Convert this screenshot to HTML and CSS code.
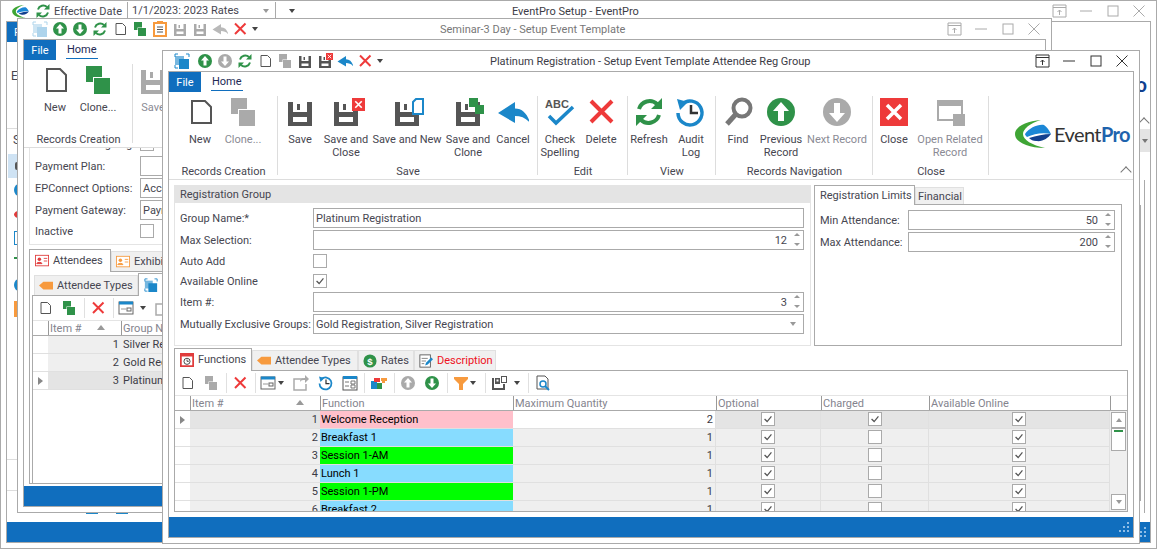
FILE: index.html
```html
<!DOCTYPE html>
<html lang="en">
<head>
<meta charset="utf-8">
<title>EventPro Setup</title>
<link rel="stylesheet" href="styles.css">
</head>
<body>
<svg class="defs" width="0" height="0" aria-hidden="true">
  <defs>
    <symbol id="i-new" viewBox="0 0 32 32"><path d="M8 5h13l6 6v16H8z" fill="#fff" stroke="#555" stroke-width="2"/></symbol>
    <symbol id="i-clone" viewBox="0 0 32 32"><rect x="4" y="2" width="16" height="16" fill="currentColor"/><rect x="11" y="13" width="18" height="18" fill="#fff"/><rect x="12" y="14" width="16" height="16" fill="currentColor"/></symbol>
    <symbol id="i-floppy" viewBox="0 0 32 32"><path fill="currentColor" fill-rule="evenodd" d="M4 6h24v24H4zM9 6v10h14V6zM13 8h3v6h-3zM9 21v5h14v-5z"/></symbol>
    <symbol id="i-xbox" viewBox="0 0 32 32"><rect width="32" height="32" fill="#ee3a3a"/><path d="M8 8l16 16M24 8L8 24" stroke="#fff" stroke-width="4"/></symbol>
    <symbol id="i-x" viewBox="0 0 32 32"><path d="M6 5l21 21M27 5L6 26" stroke="#ee3a3a" stroke-width="4" fill="none"/></symbol>
    <symbol id="i-undo" viewBox="0 0 32 32"><path fill="#1b87c9" d="M1 17L18 6v6.500C26 12.500 31 19 33 27 29 22 24 20 18 20v7z"/></symbol>
    <symbol id="i-refresh" viewBox="0 0 32 32"><g fill="none" stroke="#2f9249" stroke-width="4"><path d="M6 13a11 11 0 0 1 18-5"/><path d="M26 19a11 11 0 0 1-18 5"/></g><path fill="#2f9249" d="M29 2v11H18zM3 30V19h11z"/></symbol>
    <symbol id="i-audit" viewBox="0 0 32 32"><path d="M7 8a12 12 0 1 1-4 9" fill="none" stroke="#1b87c9" stroke-width="3.500"/><path fill="#1b87c9" d="M2 3l11 3-8 8z"/><path d="M16 9v8h7" fill="none" stroke="#333" stroke-width="2.500"/></symbol>
    <symbol id="i-find" viewBox="0 0 32 32"><circle cx="20" cy="12" r="8.500" fill="none" stroke="#777" stroke-width="4"/><path d="M14 18L5 28" stroke="#777" stroke-width="5"/></symbol>
    <symbol id="i-up" viewBox="0 0 32 32"><circle cx="16" cy="16" r="14" fill="currentColor"/><path fill="#fff" d="M16 6l8 9h-5v10h-6V15H8z"/></symbol>
    <symbol id="i-down" viewBox="0 0 32 32"><circle cx="16" cy="16" r="14" fill="currentColor"/><path fill="#fff" d="M16 26l8-9h-5V7h-6v10H8z"/></symbol>
    <symbol id="i-related" viewBox="0 0 32 32"><path fill="#aaa" fill-rule="evenodd" d="M3 4h26v18h-2V10H5v13h14v2H3z"/><rect x="19" y="18" width="12" height="12" fill="#aaa"/></symbol>
    <symbol id="i-app" viewBox="0 0 16 16"><path d="M1 4V1h3M12 1h3v3M1 12v3h3" fill="none" stroke="#1b87c9"/><rect x="1" y="3" width="9" height="9" fill="#1b87c9" opacity=".6"/><rect x="5" y="6" width="10" height="10" fill="#1b87c9"/></symbol>
    <symbol id="i-clip" viewBox="0 0 16 16"><rect x="2" y="2" width="12" height="13" fill="#fff" stroke="#f79a3e" stroke-width="2"/><rect x="5" y="0" width="6" height="3" fill="#f79a3e"/><path d="M5 6h6M5 8.500h6M5 11h6" stroke="#555"/></symbol>
    <symbol id="i-view" viewBox="0 0 16 16"><rect x="1" y="2" width="14" height="12" fill="#fff" stroke="#666"/><rect x="1" y="1.500" width="14" height="3" fill="#1b87c9"/><rect x="9" y="8" width="4" height="3" fill="none" stroke="#666"/><path d="M3 9h5" stroke="#999"/></symbol>
    <symbol id="i-export" viewBox="0 0 16 16"><path d="M10 4H1v11h12V9" fill="none" stroke="#aaa" stroke-width="1.500"/><path d="M7 7c0-3 2-4 5-4V0l4 4-4 4V5C10 5 8 5 7 7z" fill="#aaa"/></symbol>
    <symbol id="i-form" viewBox="0 0 16 16"><rect x="1" y="2" width="14" height="13" fill="#fff" stroke="#555"/><rect x="1" y="1" width="14" height="3" fill="#1b87c9"/><path d="M3 7h4M3 11h4M9 6h4v3H9zM9 10h4v3H9z" fill="none" stroke="#777"/></symbol>
    <symbol id="i-colors" viewBox="0 0 16 16"><rect y="6" width="6" height="8" fill="#1b87c9"/><rect x="6" y="8" width="5" height="6" fill="#2f9249"/><rect x="3" y="3" width="6" height="4" fill="#ee3a3a"/><path d="M10 6V3h6v3h-2v2h-3V6z" fill="#f79a3e"/></symbol>
    <symbol id="i-filter" viewBox="0 0 16 16"><path fill="#f79a3e" d="M1 2h14v2l-5 5v6H6V9L1 4z"/></symbol>
    <symbol id="i-cols" viewBox="0 0 16 16"><path fill="#555" fill-rule="evenodd" d="M1 3h8v6H4V3H3v10h9V9h2v6H1z"/><rect x="5.500" y="4.500" width="2" height="2" fill="#fff"/><rect x="10.500" y="1.500" width="5" height="6" fill="#fff" stroke="#555"/></symbol>
    <symbol id="i-search" viewBox="0 0 16 16"><path d="M2 1h8l3 3v10H2z" fill="#fff" stroke="#555"/><circle cx="8" cy="9" r="3" fill="none" stroke="#1b87c9" stroke-width="1.500"/><path d="M10 11l4 4" stroke="#1b87c9" stroke-width="2"/></symbol>
    <symbol id="i-cal" viewBox="0 0 16 16"><rect x="1" y="1" width="14" height="14" fill="#fff" stroke="#e03c3c" stroke-width="2"/><rect x="1" y="1" width="14" height="3" fill="#e03c3c"/><circle cx="8" cy="9.500" r="3.500" fill="none" stroke="#333"/><path d="M8 7.500v2h2" fill="none" stroke="#333"/></symbol>
    <symbol id="i-tag" viewBox="0 0 16 16"><path fill="#f79a3e" d="M5 3h11v9H5L0 7.500z"/></symbol>
    <symbol id="i-dollar" viewBox="0 0 16 16"><circle cx="8" cy="8" r="7.500" fill="#2f9249"/><text x="8" y="12" text-anchor="middle" font-size="11" font-weight="700" fill="#fff" font-family="Liberation Sans">$</text></symbol>
    <symbol id="i-desc" viewBox="0 0 16 16"><rect x="1" y="1" width="12" height="14" fill="#fff" stroke="#555"/><path d="M3 5h7M3 8h5M3 11h3" stroke="#777"/><path d="M7 13l1-3 6-6 2 2-6 6z" fill="#1b87c9"/></symbol>
    <symbol id="i-card" viewBox="0 0 16 16"><rect x=".5" y="1.500" width="15" height="12" fill="#fff" stroke="currentColor"/><circle cx="5" cy="6" r="2" fill="currentColor"/><path d="M2 11c0-2 6-2 6 0zM10 5h4M10 8h4" fill="currentColor" stroke="currentColor"/></symbol>
    <symbol id="i-pop" viewBox="0 0 16 16"><path d="M1 2h13v12H1zM1 4.500h13M7.500 12V7M5.500 9l2-2 2 2" fill="none" stroke="currentColor"/></symbol>
    <symbol id="i-min" viewBox="0 0 16 16"><path d="M2 8h12" stroke="currentColor"/></symbol>
    <symbol id="i-max" viewBox="0 0 16 16"><rect x="3" y="3" width="10" height="10" fill="none" stroke="currentColor"/></symbol>
    <symbol id="i-cls" viewBox="0 0 16 16"><path d="M2.500 2.500l11 11M13.500 2.500l-11 11" fill="none" stroke="currentColor"/></symbol>
    <symbol id="i-tick" viewBox="0 0 14 14"><path d="M3 7l3 3 5-6" fill="none" stroke="#555" stroke-width="1.500"/></symbol>
    <symbol id="i-grip" viewBox="0 0 12 12"><path fill="#8fbde6" d="M9 0h2v2H9zM5 4h2v2H5zM9 4h2v2H9zM1 8h2v2H1zM5 8h2v2H5zM9 8h2v2H9z"/></symbol>
    <symbol id="i-swoosh" viewBox="0 0 36 28">
      <path fill="#3fa535" d="M26 0C11 1 0 7 0 14c0 8 12 14 30 14C17 25 8 20 8 14 8 9 15 3 26 0z"/>
      <path fill="#1b87d6" d="M10 14C14 8 23 4 29 5c3 2 5 5 7 9-9-2-17 0-24 3-1-1-2-2-2-3z"/>
      <path fill="#12408f" d="M14 18c7-2 15-4 22-4-3 4-8 8-15 7-3 0-5-1-7-3z"/>
    </symbol>
  </defs>
</svg>

<main class="desktop">

  <section class="win win-main">
    <header class="titlebar">
      <svg class="main-logo"><use href="#i-swoosh"/></svg>
      <svg class="ic16"><use href="#i-refresh"/></svg>
      <span class="eff-label">Effective Date</span>
      <span class="eff-combo"><span>1/1/2023: 2023 Rates</span><i class="caret light"></i></span>
      <i class="caret qat-caret"></i>
      <span class="title main-title">EventPro Setup - EventPro</span>
      <span class="winbtns muted main-btns">
        <svg class="ic16"><use href="#i-pop"/></svg><svg class="ic16"><use href="#i-min"/></svg><svg class="ic16"><use href="#i-max"/></svg><svg class="ic16"><use href="#i-cls"/></svg>
      </span>
    </header>
    <div class="client">
      <div class="main-area">
        <div class="main-left">
          <div class="main-tab">File</div>
          <div class="main-rib">E</div>
          <div class="main-s">S</div>
          <div class="nav-row on"><i class="dot dark"></i></div>
          <div class="nav-row"><i class="dot blue"></i></div>
          <div class="nav-row"><i class="dot red"></i></div>
          <div class="nav-row"><i class="dot outline"></i></div>
          <div class="nav-row nav-thin"><i class="dot green"></i></div>
          <div class="nav-row"><i class="dot blue"></i></div>
          <div class="nav-row"><i class="dot orange"></i></div>
          <div class="main-line"></div>
          <div class="main-line second"></div>
        </div>
        <div class="main-bits">
          <i class="bit"></i><i class="bit"></i>
        </div>
        <div class="main-right">
          <div class="main-right-top">
            <span class="logo-clip">Pro</span>
            <i class="chev"></i>
          </div>
          <div class="main-band"><i class="caret"></i></div>
          <div class="main-gap"></div>
          <div class="main-rails"><div class="rail-inner"></div></div>
        </div>
      </div>
      <footer class="status"><svg class="grip"><use href="#i-grip"/></svg></footer>
    </div>
  </section>

  <section class="win win-two">
    <header class="titlebar">
      <div class="qat">
        <span class="qi"><svg class="ic16 faint"><use href="#i-app"/></svg></span>
        <span class="qi"><svg class="ic16 green"><use href="#i-up"/></svg></span>
        <span class="qi"><svg class="ic16 green"><use href="#i-down"/></svg></span>
        <span class="qi"><svg class="ic16"><use href="#i-refresh"/></svg></span>
        <span class="qi"><svg class="ic16"><use href="#i-new"/></svg></span>
        <span class="qi"><svg class="ic16 green"><use href="#i-clone"/></svg></span>
        <span class="qi"><svg class="ic16"><use href="#i-clip"/></svg></span>
        <span class="qi"><svg class="ic16 grey"><use href="#i-floppy"/></svg></span>
        <span class="qi"><svg class="ic16 grey"><use href="#i-floppy"/></svg></span>
        <span class="qi"><svg class="ic16 fade"><use href="#i-undo"/></svg></span>
        <span class="qi"><svg class="ic16"><use href="#i-x"/></svg></span>
        <i class="caret qat-more"></i>
      </div>
      <span class="title two-title">Seminar-3 Day - Setup Event Template</span>
      <span class="winbtns muted">
        <svg class="ic16"><use href="#i-pop"/></svg><svg class="ic16"><use href="#i-min"/></svg><svg class="ic16"><use href="#i-max"/></svg><svg class="ic16"><use href="#i-cls"/></svg>
      </span>
    </header>
    <div class="client">
      <nav class="ribtabs"><span class="file">File</span><span class="home">Home</span></nav>
      <div class="ribbon">
        <div class="rgroup g1">
          <div class="rbtns">
            <div class="rbtn w42"><svg class="ic32"><use href="#i-new"/></svg><span>New</span></div>
            <div class="rbtn w44"><svg class="ic32 green"><use href="#i-clone"/></svg><span>Clone...</span></div>
          </div>
          <div class="rlabel">Records Creation</div>
        </div>
        <div class="rgroup">
          <div class="rbtns">
            <div class="rbtn w40 dis"><svg class="ic32 grey"><use href="#i-floppy"/></svg><span>Save</span></div>
          </div>
        </div>
      </div>
      <div class="two-body">
        <div class="two-form">
          <div class="frow"><label>Use Event Subgoing</label><i class="cb"></i></div>
          <div class="frow"><label>Payment Plan:</label><i class="inp"></i></div>
          <div class="frow"><label>EPConnect Options:</label><i class="inp">Access</i></div>
          <div class="frow"><label>Payment Gateway:</label><i class="inp">Payment</i></div>
          <div class="frow last"><label>Inactive</label><i class="cb"></i></div>
        </div>
        <div class="tabs two-tabs">
          <span class="tab active t82"><svg class="ic16 red"><use href="#i-card"/></svg>Attendees</span>
          <span class="tab"><svg class="ic16 orange"><use href="#i-card"/></svg>Exhibitors</span>
        </div>
        <div class="two-panel">
          <div class="tabs two-sub">
            <span class="tab t104"><svg class="ic16"><use href="#i-tag"/></svg>Attendee Types</span>
            <span class="tab active"><svg class="ic16"><use href="#i-app"/></svg>Registration</span>
          </div>
          <div class="gridbox two-grid">
            <div class="toolbar">
              <span class="ti"><svg class="ic16"><use href="#i-new"/></svg></span>
              <span class="ti"><svg class="ic16 green"><use href="#i-clone"/></svg></span>
              <i class="tsep ml3"></i>
              <span class="ti ml1"><svg class="ic16"><use href="#i-x"/></svg></span>
              <i class="tsep ml3"></i>
              <span class="ti"><svg class="ic16"><use href="#i-view"/></svg></span>
              <i class="caret"></i>
              <span class="ti ml3"><svg class="ic16"><use href="#i-export"/></svg></span>
            </div>
            <div class="ghead two-cols">
              <span></span><span>Item #<i class="sort"></i></span><span>Group Name</span>
            </div>
            <div class="grow two-cols"><span class="c-ind"></span><span class="c-num">1</span><span class="c-txt">Silver Registration</span></div>
            <div class="grow two-cols"><span class="c-ind"></span><span class="c-num">2</span><span class="c-txt">Gold Registration</span></div>
            <div class="grow two-cols sel"><span class="c-ind"><i class="rowmark"></i></span><span class="c-num">3</span><span class="c-txt">Platinum Registration</span></div>
          </div>
        </div>
      </div>
      <footer class="status"></footer>
    </div>
  </section>

  <section class="win win-three">
    <header class="titlebar">
      <div class="qat">
        <span class="qi"><svg class="ic16"><use href="#i-app"/></svg></span>
        <span class="qi ml3"><svg class="ic16 green"><use href="#i-up"/></svg></span>
        <span class="qi"><svg class="ic16 grey"><use href="#i-down"/></svg></span>
        <span class="qi"><svg class="ic16"><use href="#i-refresh"/></svg></span>
        <span class="qi"><svg class="ic16"><use href="#i-new"/></svg></span>
        <span class="qi"><svg class="ic16 grey"><use href="#i-clone"/></svg></span>
        <span class="qi"><svg class="ic16 dark"><use href="#i-floppy"/></svg></span>
        <span class="qi rel"><svg class="ic16 dark"><use href="#i-floppy"/></svg><svg class="badge-s"><use href="#i-xbox"/></svg></span>
        <span class="qi"><svg class="ic16"><use href="#i-undo"/></svg></span>
        <span class="qi"><svg class="ic16"><use href="#i-x"/></svg></span>
        <i class="caret qat-more"></i>
      </div>
      <span class="title three-title">Platinum Registration - Setup Event Template Attendee Reg Group</span>
      <span class="winbtns">
        <svg class="ic16"><use href="#i-pop"/></svg><svg class="ic16"><use href="#i-min"/></svg><svg class="ic16"><use href="#i-max"/></svg><svg class="ic16"><use href="#i-cls"/></svg>
      </span>
    </header>
    <div class="client">
      <nav class="ribtabs"><span class="file">File</span><span class="home">Home</span></nav>
      <div class="ribbon">
        <div class="rgroup g1">
          <div class="rbtns">
            <div class="rbtn w42"><svg class="ic32"><use href="#i-new"/></svg><span>New</span></div>
            <div class="rbtn w44 dis"><svg class="ic32 grey"><use href="#i-clone"/></svg><span>Clone...</span></div>
          </div>
          <div class="rlabel">Records Creation</div>
        </div>
        <div class="rgroup g2">
          <div class="rbtns">
            <div class="rbtn w40"><svg class="ic32 dark"><use href="#i-floppy"/></svg><span>Save</span></div>
            <div class="rbtn w52 rel">
              <svg class="ic32 dark"><use href="#i-floppy"/></svg>
              <svg class="badge b-x"><use href="#i-xbox"/></svg>
              <span>Save and Close</span>
            </div>
            <div class="rbtn w70 rel">
              <svg class="ic32 dark"><use href="#i-floppy"/></svg>
              <svg class="badge b-doc" viewBox="0 0 12 17"><path d="M4 1h7v15H1V4z" fill="#fff" stroke="#1b87c9" stroke-width="2"/></svg>
              <span>Save and New</span>
            </div>
            <div class="rbtn w52 rel">
              <svg class="ic32 dark"><use href="#i-floppy"/></svg>
              <svg class="badge b-clone" viewBox="0 0 15 16"><rect width="9" height="9" fill="#2f9249"/><rect x="6" y="7" width="9" height="9" fill="#2f9249"/></svg>
              <span>Save and Clone</span>
            </div>
            <div class="rbtn w38"><svg class="ic32"><use href="#i-undo"/></svg><span>Cancel</span></div>
          </div>
          <div class="rlabel">Save</div>
        </div>
        <div class="rgroup g3">
          <div class="rbtns">
            <div class="rbtn w40">
              <svg class="ic32" viewBox="0 0 32 32"><text x="1" y="12" class="abc">ABC</text><path d="M5 20l7 7L29 11" fill="none" stroke="#1b87c9" stroke-width="3.500"/></svg>
              <span>Check Spelling</span>
            </div>
            <div class="rbtn w42"><svg class="ic32"><use href="#i-x"/></svg><span>Delete</span></div>
          </div>
          <div class="rlabel">Edit</div>
        </div>
        <div class="rgroup g4">
          <div class="rbtns">
            <div class="rbtn w42"><svg class="ic32"><use href="#i-refresh"/></svg><span>Refresh</span></div>
            <div class="rbtn w42"><svg class="ic32"><use href="#i-audit"/></svg><span>Audit Log</span></div>
          </div>
          <div class="rlabel">View</div>
        </div>
        <div class="rgroup g5">
          <div class="rbtns">
            <div class="rbtn w44"><svg class="ic32"><use href="#i-find"/></svg><span>Find</span></div>
            <div class="rbtn w42"><svg class="ic32 green"><use href="#i-up"/></svg><span>Previous Record</span></div>
            <div class="rbtn w70 dis"><svg class="ic32 grey"><use href="#i-down"/></svg><span>Next Record</span></div>
          </div>
          <div class="rlabel">Records Navigation</div>
        </div>
        <div class="rgroup g6">
          <div class="rbtns">
            <div class="rbtn w42"><svg class="ic28"><use href="#i-xbox"/></svg><span>Close</span></div>
            <div class="rbtn w70 dis"><svg class="ic32"><use href="#i-related"/></svg><span>Open Related Record</span></div>
          </div>
          <div class="rlabel">Close</div>
        </div>
        <div class="logo">
          <svg class="swoosh"><use href="#i-swoosh"/></svg>
          <span class="logotext">Event<b>Pro</b></span>
        </div>
        <i class="chev rib-chev"></i>
      </div>

      <div class="body">
        <div class="toprow">
          <div class="regbox">
            <h2 class="boxhead">Registration Group</h2>
            <div class="form">
              <label>Group Name:*</label><div class="inp dk">Platinum Registration</div>
              <label>Max Selection:</label><div class="inp num dk">12<i class="spin"></i></div>
              <label>Auto Add</label><div class="cbwrap"><i class="cb"></i></div>
              <label>Available Online</label><div class="cbwrap"><i class="cb"><svg><use href="#i-tick"/></svg></i></div>
              <label>Item #:</label><div class="inp num dk">3<i class="spin"></i></div>
              <label>Mutually Exclusive Groups:</label><div class="inp dk drop">Gold Registration, Silver Registration<i class="caret light"></i></div>
            </div>
          </div>
          <div class="limits">
            <div class="tabs lim-tabs">
              <span class="tab active">Registration Limits</span>
              <span class="tab">Financial</span>
            </div>
            <div class="limpanel">
              <label>Min Attendance:</label><div class="inp num dk">50<i class="spin"></i></div>
              <label>Max Attendance:</label><div class="inp num dk">200<i class="spin"></i></div>
            </div>
          </div>
        </div>

        <div class="tabs low-tabs">
          <span class="tab active t78"><svg class="ic16"><use href="#i-cal"/></svg>Functions</span>
          <span class="tab t106"><svg class="ic16"><use href="#i-tag"/></svg>Attendee Types</span>
          <span class="tab t56"><svg class="ic16"><use href="#i-dollar"/></svg>Rates</span>
          <span class="tab t82 redtxt"><svg class="ic16"><use href="#i-desc"/></svg>Description</span>
        </div>
        <div class="gridbox main-grid">
          <div class="toolbar">
            <span class="ti"><svg class="ic16"><use href="#i-new"/></svg></span>
            <span class="ti"><svg class="ic16 grey"><use href="#i-clone"/></svg></span>
            <i class="tsep ml3"></i>
            <span class="ti ml1"><svg class="ic16"><use href="#i-x"/></svg></span>
            <i class="tsep ml3"></i>
            <span class="ti"><svg class="ic16"><use href="#i-view"/></svg></span>
            <i class="caret mln2"></i>
            <span class="ti ml3"><svg class="ic16"><use href="#i-export"/></svg></span>
            <span class="ti ml1"><svg class="ic16"><use href="#i-audit"/></svg></span>
            <span class="ti"><svg class="ic16"><use href="#i-form"/></svg></span>
            <i class="tsep ml2"></i>
            <span class="ti ml2"><svg class="ic16"><use href="#i-colors"/></svg></span>
            <i class="tsep ml3"></i>
            <span class="ti ml1"><svg class="ic16 grey"><use href="#i-up"/></svg></span>
            <span class="ti"><svg class="ic16 green"><use href="#i-down"/></svg></span>
            <i class="tsep ml3"></i>
            <span class="ti ml1"><svg class="ic16"><use href="#i-filter"/></svg></span>
            <i class="caret mln3"></i>
            <i class="tsep ml7"></i>
            <span class="ti ml1"><svg class="ic16"><use href="#i-cols"/></svg></span>
            <i class="caret ml3"></i>
            <i class="tsep ml6"></i>
            <span class="ti ml2"><svg class="ic16"><use href="#i-search"/></svg></span>
          </div>
          <div class="ghead main-cols head-cols">
            <span></span><span>Item #<i class="sort"></i></span><span>Function</span><span>Maximum Quantity</span><span>Optional</span><span>Charged</span><span>Available Online</span><span></span>
          </div>
          <div class="gbody">
            <div class="grows">
              <div class="grow main-cols sel">
                <span class="c-ind"><i class="rowmark"></i></span><span class="c-num">1</span><span class="c-fn pink">Welcome Reception</span><span class="c-qty focus">2</span>
                <span class="c-chk"><i class="cb"><svg><use href="#i-tick"/></svg></i></span><span class="c-chk"><i class="cb"><svg><use href="#i-tick"/></svg></i></span><span class="c-chk"><i class="cb"><svg><use href="#i-tick"/></svg></i></span>
              </div>
              <div class="grow main-cols">
                <span class="c-ind"></span><span class="c-num">2</span><span class="c-fn sky">Breakfast 1</span><span class="c-qty">1</span>
                <span class="c-chk"><i class="cb"><svg><use href="#i-tick"/></svg></i></span><span class="c-chk"><i class="cb"></i></span><span class="c-chk"><i class="cb"><svg><use href="#i-tick"/></svg></i></span>
              </div>
              <div class="grow main-cols">
                <span class="c-ind"></span><span class="c-num">3</span><span class="c-fn lime">Session 1-AM</span><span class="c-qty">1</span>
                <span class="c-chk"><i class="cb"><svg><use href="#i-tick"/></svg></i></span><span class="c-chk"><i class="cb"></i></span><span class="c-chk"><i class="cb"><svg><use href="#i-tick"/></svg></i></span>
              </div>
              <div class="grow main-cols">
                <span class="c-ind"></span><span class="c-num">4</span><span class="c-fn sky">Lunch 1</span><span class="c-qty">1</span>
                <span class="c-chk"><i class="cb"><svg><use href="#i-tick"/></svg></i></span><span class="c-chk"><i class="cb"></i></span><span class="c-chk"><i class="cb"><svg><use href="#i-tick"/></svg></i></span>
              </div>
              <div class="grow main-cols">
                <span class="c-ind"></span><span class="c-num">5</span><span class="c-fn lime">Session 1-PM</span><span class="c-qty">1</span>
                <span class="c-chk"><i class="cb"><svg><use href="#i-tick"/></svg></i></span><span class="c-chk"><i class="cb"></i></span><span class="c-chk"><i class="cb"><svg><use href="#i-tick"/></svg></i></span>
              </div>
              <div class="grow main-cols">
                <span class="c-ind"></span><span class="c-num">6</span><span class="c-fn sky">Breakfast 2</span><span class="c-qty">1</span>
                <span class="c-chk"><i class="cb"><svg><use href="#i-tick"/></svg></i></span><span class="c-chk"><i class="cb"></i></span><span class="c-chk"><i class="cb"><svg><use href="#i-tick"/></svg></i></span>
              </div>
            </div>
            <div class="scroll">
              <div class="sbtn"><i class="tri-up"></i></div>
              <div class="sthumb"><i></i></div>
              <div class="sfill"></div>
              <div class="sbtn"><i class="tri-down"></i></div>
            </div>
          </div>
        </div>
      </div>
      <footer class="status"><svg class="grip"><use href="#i-grip"/></svg></footer>
    </div>
  </section>
</main>
</body>
</html>
```

FILE: styles.css
```css
* { box-sizing: border-box; }
html, body { margin: 0; height: 100%; }
body {
  background: #fff;
  overflow: hidden;
  font-family: Roboto, "Open Sans", sans-serif;
  font-size: 11px;
  line-height: 13px;
  color: #464650;
}
.defs { position: absolute; }
.desktop { position: relative; width: 1157px; height: 549px; overflow: hidden; }

/* windows on the desktop */
.win {
  position: absolute;
  display: flex;
  flex-direction: column;
  background: #fff;
  border: 1px solid #aaa;
  overflow: hidden;
}
.win-main { left: 0; top: 0; width: 1157px; height: 549px; z-index: 1; }
.win-two { left: 17px; top: 18px; width: 1035px; height: 495px; z-index: 2; }
.win-three { left: 162px; top: 50px; width: 978px; height: 494px; z-index: 3; }

.titlebar { position: relative; display: flex; align-items: center; flex: 0 0 20px; height: 20px; }
.title { position: absolute; top: 4px; white-space: nowrap; }
.main-title { left: 511px; color: #3c3c46; }
.two-title { left: 422px; color: #777; }
.three-title { left: 327px; color: #3c3c46; }
.winbtns { position: absolute; right: 9px; top: 2px; display: flex; gap: 10.500px; color: #333; }
.winbtns.muted { color: #aaa; }

.qat { display: flex; align-items: center; padding-left: 12px; }
.win-three .qat { padding-left: 9px; }
.qi { position: relative; display: flex; justify-content: center; width: 20px; }
.qat-more { margin-left: 9px; }
.rel { position: relative; }
.badge-s { position: absolute; left: 11px; top: 0; width: 7px; height: 7px; }

.main-logo { width: 17px; height: 13px; margin-left: 11px; }
.win-main .titlebar > .ic16 { margin-left: 6px; }
.eff-label { width: 70px; margin-left: 3px; white-space: nowrap; }
.eff-combo {
  display: flex; align-items: center; justify-content: space-between;
  width: 149px; height: 19px; margin-left: 3px; padding: 0 4px;
  border: 1px solid #aaa; border-top: 0;
}
.caret.qat-caret { margin-left: 13px; }

.client {
  flex: 1;
  min-height: 0;
  display: flex;
  flex-direction: column;
  margin: 0 5px 5px;
  border: 1px solid #aaa;
  overflow: hidden;
}
.status { position: relative; flex: 0 0 20px; background: #106ebe; }
.grip { position: absolute; right: 3px; bottom: 3px; width: 12px; height: 12px; }

/* icon sizes */
.ic16 { width: 16px; height: 16px; flex: none; display: block; }
.ic32 { width: 32px; height: 32px; display: block; flex: none; }
.ic28 { width: 28px; height: 28px; margin: 2px; display: block; flex: none; }
.green { color: #2f9249; }
.grey { color: #aaa; }
.dark { color: #555; }
.red { color: #e03c3c; }
.orange { color: #f79a3e; }
.faint { opacity: .35; }
.fade { filter: grayscale(1); opacity: .5; }
.caret {
  display: inline-block; flex: none; width: 0; height: 0;
  margin: 0 2px;
  border: 3.500px solid transparent; border-top: 4px solid #444; border-bottom: 0;
}
.caret.light { border-top-color: #999; }

/* main window slivers */
.main-area { flex: 1; min-height: 0; display: flex; justify-content: space-between; position: relative; }
.main-left { width: 10px; overflow: hidden; }
.main-tab { height: 20px; width: 60px; padding: 4px 0 0 7px; background: #106ebe; color: #fff; }
.main-rib { height: 87px; padding: 28px 0 0 4px; border-bottom: 1px solid #ddd; font-size: 12px; }
.main-s { height: 25px; padding: 5px 0 0 6px; font-size: 12px; }
.nav-row { display: flex; align-items: center; width: 10px; height: 24px; padding-left: 7px; }
.nav-row.on { background: #cfe3f4; margin-left: 1px; }
.nav-thin { height: 16px; margin-bottom: 7px; }
.dot { display: block; flex: none; width: 10px; height: 12px; border-radius: 50%; }
.dot.blue { background: #1b87c9; }
.dot.red { background: #e03c3c; height: 7px; }
.dot.dark { background: #555; height: 8px; border-radius: 2px; }
.dot.outline { border: 1px solid #1b87c9; border-radius: 0; height: 14px; }
.dot.green { background: #2f9249; height: 2px; border-radius: 0; }
.dot.orange { background: #f79a3e; border-radius: 0; height: 16px; }
.main-line { height: 1px; background: #ddd; margin-top: 138px; }
.main-line.second { margin-top: 30px; }
.main-bits { display: flex; gap: 18px; align-self: flex-end; margin-right: auto; margin-left: 69px; margin-bottom: 8px; }
.bit { width: 12px; height: 2px; background: #1b87c9; }
.main-right { width: 20px; display: flex; flex-direction: column; }
.main-right-top { position: relative; height: 107px; }
.logo-clip { position: absolute; right: 3px; top: 50px; font: 700 20px/24px Lato, sans-serif; color: #12408f; }
.main-band { height: 23px; background: #e4e4e4; display: flex; align-items: center; padding-left: 10px; }
.main-band .caret { border-top-color: #777; }
.main-gap { height: 28px; }
.main-rails { flex: 1; margin-right: 5px; margin-bottom: 9px; border-right: 1px solid #aaa; padding: 25px 3px 12px 0; }
.rail-inner { height: 100%; border-right: 1px solid #aaa; }

/* ribbon */
.ribtabs { display: flex; flex: 0 0 20px; height: 20px; }
.file { width: 32px; padding-top: 4px; text-align: center; background: #106ebe; color: #fff; }
.home { position: relative; margin-left: 10px; padding: 3px 1px 0; color: #222a55; }
.home::after { content: ""; position: absolute; left: 0; right: 0; top: 18px; height: 1px; background: #106ebe; }
.ribbon { position: relative; display: flex; flex: 0 0 88px; height: 88px; border-bottom: 1px solid #ddd; }
.rgroup { position: relative; display: flex; flex-direction: column; height: 87px; padding-top: 4px; }
.g1 { width: 109px; padding-left: 10px; }
.g2 { width: 260px; padding-left: 2px; }
.g3 { width: 90px; padding-left: 2px; }
.g4 { width: 88px; }
.g5 { width: 157px; }
.g6 { width: 116px; }
.rgroup::after { content: ""; position: absolute; right: 0; top: 4px; bottom: 4px; width: 1px; background: #ddd; }
.rbtns { flex: 1; display: flex; align-items: flex-start; }
.rbtn { display: flex; flex-direction: column; align-items: center; flex: none; text-align: center; color: #464650; }
.rbtn span { margin-top: 5px; line-height: 13px; }
.dis, .rbtn.dis { color: #8a8a94; }
.w38 { width: 38px; } .w40 { width: 40px; } .w42 { width: 42px; } .w44 { width: 44px; } .w52 { width: 52px; } .w70 { width: 70px; }
.rlabel { height: 14px; margin-left: -10px; text-align: center; color: #464650; white-space: nowrap; }
.g2 .rlabel, .g3 .rlabel { margin-left: -2px; }
.g4 .rlabel, .g5 .rlabel, .g6 .rlabel { margin-left: 0; }
.badge { position: absolute; }
.b-x { left: 32px; top: 2px; width: 13px; height: 13px; }
.b-doc { left: 40px; top: 2px; width: 12px; height: 17px; }
.b-clone { left: 27px; top: 2px; width: 15px; height: 16px; }
.abc { font: 700 11px "Liberation Sans", sans-serif; fill: #555; }
.logo { display: flex; align-items: center; margin-left: 26px; height: 30px; margin-top: 27px; }
.swoosh { width: 36px; height: 28px; flex: none; }
.logotext { margin-left: 3px; font: 400 20px/28px Lato, sans-serif; letter-spacing: -.6px; color: #333; }
.logotext b { font-weight: 700; color: #1e63ad; }
.chev { display: block; width: 8px; height: 8px; border-left: 1px solid #777; border-top: 1px solid #777; transform: rotate(45deg); }
.main-right-top .chev { position: absolute; left: 10px; top: 97px; }
.rib-chev { position: absolute; right: 3px; top: 76px; }

/* tabs */
.tabs { display: flex; align-items: flex-end; }
.tab {
  display: flex; align-items: center; gap: 4px; flex: none;
  height: 20px; padding: 0 4px;
  background: #f0f0f0; border: 1px solid #e0e0e0; border-bottom: 0; white-space: nowrap;
}
.tab.active { height: 23px; padding-bottom: 1px; background: #fff; border-color: #aaa; margin-bottom: -1px; position: relative; z-index: 1; padding-left: 5px; }
.tab svg { width: 14px; height: 14px; }
.t78 { width: 78px; } .t106 { width: 106px; } .t56 { width: 56px; } .t82 { width: 82px; } .t104 { width: 104px; }
.redtxt { color: #ee1122; }

/* form area */
.body { flex: 1; min-height: 0; display: flex; flex-direction: column; padding: 5px; }
.toprow { display: flex; gap: 3px; height: 161px; flex: none; }
.regbox { width: 637px; border: 1px solid #e4e4e4; border-top: 0; }
.boxhead { height: 18px; margin: 0 -1px; padding: 3px 5px 0 6px; background: #e4e4e4; font-weight: 400; font-size: 11px; line-height: 13px; color: #464650; }
.form { display: grid; grid-template-columns: 133px 491px; grid-template-rows: 20px 20px 18px 18px 20px 20px; row-gap: 2px; padding: 5px; }
.form label, .limpanel label, .frow label { align-self: center; white-space: nowrap; }
.inp {
  display: flex; align-items: center; height: 20px; padding: 0 2px;
  border: 1px solid #aaa; background: #fff; font-style: normal; white-space: nowrap; overflow: hidden;
}
.num { justify-content: flex-end; padding-right: 16px; position: relative; }
.drop { justify-content: space-between; padding-right: 5px; }
.spin { position: absolute; right: 2px; top: 3px; width: 7px; height: 12px; }
.spin::before, .spin::after { content: ""; position: absolute; left: 0; border: 3.500px solid transparent; }
.spin::before { top: -1px; border-top: 0; border-bottom: 3px solid #999; }
.spin::after { bottom: 0; border-bottom: 0; border-top: 3px solid #999; }
.cb { display: block; width: 14px; height: 14px; border: 1px solid #aaa; background: #fff; flex: none; }
.cb svg { display: block; width: 12px; height: 12px; }
.cbwrap { padding-top: 2px; }

.limits { width: 308px; display: flex; flex-direction: column; }
.lim-tabs { height: 19px; flex: none; }
.lim-tabs .tab { height: 17px; padding: 0 2px; }
.lim-tabs .tab.active { width: 101px; height: 20px; padding: 0 0 1px 5px; }
.lim-tabs .tab:last-child { width: 49px; }
.limpanel {
  flex: 1; display: grid; grid-template-columns: 88px 207px; grid-auto-rows: 20px; row-gap: 2px; align-content: start;
  padding: 5px; border: 1px solid #aaa;
}

.low-tabs { flex: none; height: 22px; margin-top: 2px; }

/* grid */
.gridbox { border: 1px solid #aaa; overflow: hidden; background: #fff; }
.main-grid { flex: 1; min-height: 0; display: flex; flex-direction: column; }
.toolbar { display: flex; align-items: center; flex: 0 0 25px; height: 25px; border-bottom: 1px solid #e4e4e4; }
.ti { display: flex; justify-content: center; flex: none; width: 24px; }
.tsep { display: block; flex: none; width: 1px; height: 20px; background: #e0e0e0; }
.ml1 { margin-left: 1px; } .ml2 { margin-left: 2px; } .ml3 { margin-left: 3px; } .ml6 { margin-left: 6px; } .ml7 { margin-left: 7px; }
.caret.ml3 { margin-left: 3px; }
.caret.mln2 { margin-left: -2px; }
.caret.mln3 { margin-left: -3px; }
.ghead { display: grid; flex: 0 0 15px; height: 15px; border-bottom: 1px solid #aaa; color: #84848e; line-height: 15px; }
.ghead > span { position: relative; border-left: 1px solid #999; padding-left: 1px; white-space: nowrap; overflow: hidden; height: 14px; }
.ghead > span:first-child { border-left: 0; }
.sort { position: absolute; right: 16px; top: 4px; border: 4.500px solid transparent; border-top: 0; border-bottom: 5px solid #999; }
.main-cols { grid-template-columns: 15px 130px 193px 203px 105px 108px 181px; }
.head-cols { grid-template-columns: 15px 130px 193px 203px 105px 108px 181px 17px; }
.two-cols { grid-template-columns: 15px 73px 1fr; }
.gbody { flex: 1; min-height: 0; display: flex; overflow: hidden; }
.grows { width: 935px; flex: none; }
.grow { display: grid; height: 18px; background: #efefef; border-bottom: 1px solid #e0e0e0; color: #3c3c46; }
.grow > span { height: 17px; line-height: 18px; white-space: nowrap; overflow: hidden; border-right: 1px solid #e0e0e0; }
.grow.sel { background: #e4e4e4; }
.grow .c-ind { background: #fff; border-right: 0; position: relative; }
.grow .c-num { text-align: right; padding-right: 2px; border-right: 0; }
.c-txt { padding-left: 2px; }
.grow .c-fn { color: #000; padding-left: 1px; border-right: 0; }
.pink { background: #ffc0cb; }
.sky { background: #87dcff; }
.lime { background: #00ff00; }
.c-qty { text-align: right; padding-right: 2px; }
.c-qty.focus { background: #fff; }
.c-chk { display: flex; justify-content: center; padding-top: 1px; }
.rowmark { position: absolute; left: 5px; top: 5px; border: 4px solid transparent; border-left: 5px solid #888; border-right: 0; }
.scroll { flex: 1; display: flex; flex-direction: column; padding: 1px; background: #efefef; }
.sbtn { flex: none; display: flex; justify-content: center; align-items: center; width: 15px; height: 16px; border: 1px solid #aaa; background: #fff; }
.sthumb { flex: none; width: 15px; height: 23px; border: 1px solid #aaa; background: #fff; padding: 1px 2px; }
.sthumb i { display: block; height: 2px; background: #2f9249; }
.sfill { height: 43px; flex: none; }
.tri-up { border: 3.500px solid transparent; border-top: 0; border-bottom: 4px solid #999; }
.tri-down { border: 3.500px solid transparent; border-bottom: 0; border-top: 4px solid #999; }

/* window two body */
.two-body { flex: 1; min-height: 0; padding: 0 5px; }
.two-form { width: 200px; height: 97px; border: 1px solid #e4e4e4; border-top: 0; overflow: hidden; }
.two-form .frow:first-child { margin-top: -15px; }
.frow { display: grid; grid-template-columns: 105px 1fr; height: 22px; padding-left: 5px; align-items: center; }
.frow.last { height: 20px; }
.frow .inp { height: 20px; padding-left: 2px; }
.two-tabs { height: 24px; margin-top: 2px; width: 200px; }
.two-panel { width: 300px; height: 213px; border: 1px solid #aaa; padding: 1px 0 0 2px; }
.two-sub { height: 22px; padding-left: 2px; }
.two-grid { height: 189px; width: 296px; }
.two-grid .grow { width: 294px; }
```
